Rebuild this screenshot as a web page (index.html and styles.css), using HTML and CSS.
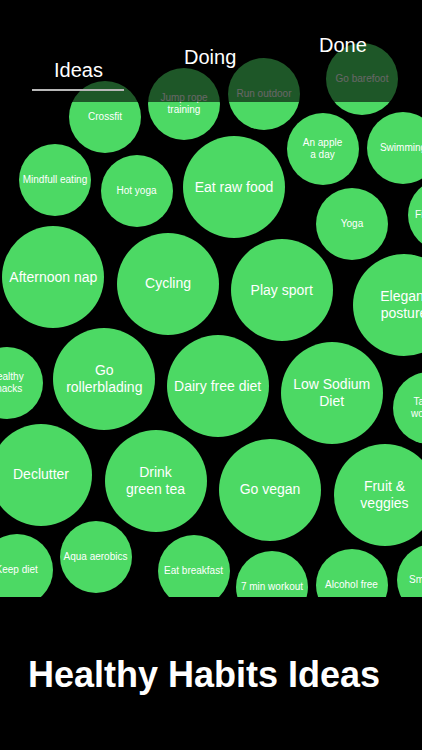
FILE: index.html
```html
<!DOCTYPE html>
<html lang="en">
<head>
<meta charset="utf-8">
<title>Healthy Habits Ideas</title>
<link rel="stylesheet" href="styles.css">
</head>
<body>
<div class="screen">
  <div class="bubbles">
    <div class="bubble sm" style="--x:105;--y:117">Crossfit</div>
    <div class="bubble sm" style="--x:184;--y:104">Jump rope<br>training</div>
    <div class="bubble sm" style="--x:264;--y:94">Run outdoor</div>
    <div class="bubble sm" style="--x:362;--y:79">Go barefoot</div>
    <div class="bubble sm" style="--x:322.5;--y:148.5">An apple<br>a day</div>
    <div class="bubble sm" style="--x:403;--y:148">Swimming</div>
    <div class="bubble sm" style="--x:55;--y:180">Mindfull eating</div>
    <div class="bubble sm" style="--x:136.5;--y:191">Hot yoga</div>
    <div class="bubble lg" style="--x:234;--y:187">Eat raw food</div>
    <div class="bubble sm" style="--x:352;--y:223.5">Yoga</div>
    <div class="bubble sm" style="--x:444;--y:215">Fitness class</div>
    <div class="bubble lg" style="--x:53.3;--y:277">Afternoon nap</div>
    <div class="bubble lg" style="--x:168;--y:283.5">Cycling</div>
    <div class="bubble lg" style="--x:281.7;--y:290">Play sport</div>
    <div class="bubble lg" style="--x:404;--y:305">Elegant<br>posture</div>
    <div class="bubble sm" style="--x:6.7;--y:382.7">Healthy<br>snacks</div>
    <div class="bubble lg" style="--x:104.3;--y:379">Go<br>rollerblading</div>
    <div class="bubble lg" style="--x:217.7;--y:386">Dairy free diet</div>
    <div class="bubble lg" style="--x:331.7;--y:393">Low Sodium<br>Diet</div>
    <div class="bubble sm" style="--x:428.5;--y:407.5">Tabata<br>workout</div>
    <div class="bubble lg" style="--x:41;--y:474.5">Declutter</div>
    <div class="bubble lg" style="--x:155.5;--y:481">Drink<br>green tea</div>
    <div class="bubble lg" style="--x:270;--y:489.5">Go vegan</div>
    <div class="bubble lg" style="--x:384.5;--y:494.5">Fruit &amp;<br>veggies</div>
    <div class="bubble sm" style="--x:16.7;--y:570">Keep diet</div>
    <div class="bubble sm" style="--x:95.5;--y:557">Aqua aerobics</div>
    <div class="bubble sm" style="--x:193.5;--y:571">Eat breakfast</div>
    <div class="bubble sm" style="--x:272;--y:586.5">7 min workout</div>
    <div class="bubble sm" style="--x:351.5;--y:585">Alcohol free</div>
    <div class="bubble sm" style="--x:432.7;--y:580">Smoothies</div>

    <div class="shade"></div>
    <div class="tab tab-ideas">Ideas</div>
    <div class="tab tab-doing">Doing</div>
    <div class="tab tab-done">Done</div>
    <div class="tab-line"></div>
  </div>
  <h1 class="title">Healthy Habits Ideas</h1>
</div>
</body>
</html>
```
FILE: styles.css
```css
html, body {
  margin: 0;
  padding: 0;
  background: #000;
}

.screen {
  width: 422px;
  height: 750px;
  overflow: hidden;
  background: #000;
  font-family: "Liberation Sans", Arial, sans-serif;
  color: #fff;
}

.bubbles {
  position: relative;
  width: 422px;
  height: 597px;
  overflow: hidden;
}

.bubble {
  --r: 36px;
  position: absolute;
  left: calc(var(--x) * 1px - var(--r));
  top: calc(var(--y) * 1px - var(--r));
  width: calc(var(--r) * 2);
  height: calc(var(--r) * 2);
  border-radius: 50%;
  background: #4cd964;
  display: flex;
  align-items: center;
  justify-content: center;
  text-align: center;
  white-space: nowrap;
  color: #fff;
  font-size: 10px;
  line-height: 12px;
}

.bubble.lg {
  --r: 51px;
  font-size: 14px;
  line-height: 17px;
}

.shade {
  position: absolute;
  left: 0;
  top: 0;
  width: 422px;
  height: 102px;
  background: rgba(0, 0, 0, 0.6);
}

.tab {
  position: absolute;
  font-size: 20px;
  line-height: 24px;
  color: #fff;
  white-space: nowrap;
}

.tab-ideas {
  left: 54px;
  top: 58px;
}

.tab-doing {
  left: 184px;
  top: 45px;
}

.tab-done {
  left: 319px;
  top: 33px;
}

.tab-line {
  position: absolute;
  left: 32px;
  top: 88.5px;
  width: 92px;
  height: 2px;
  background: #b8b8b8;
}

.title {
  margin: 60px 0 0 0;
  padding-left: 28px;
  font-size: 36px;
  line-height: 36px;
  font-weight: 700;
  color: #fff;
}
```
